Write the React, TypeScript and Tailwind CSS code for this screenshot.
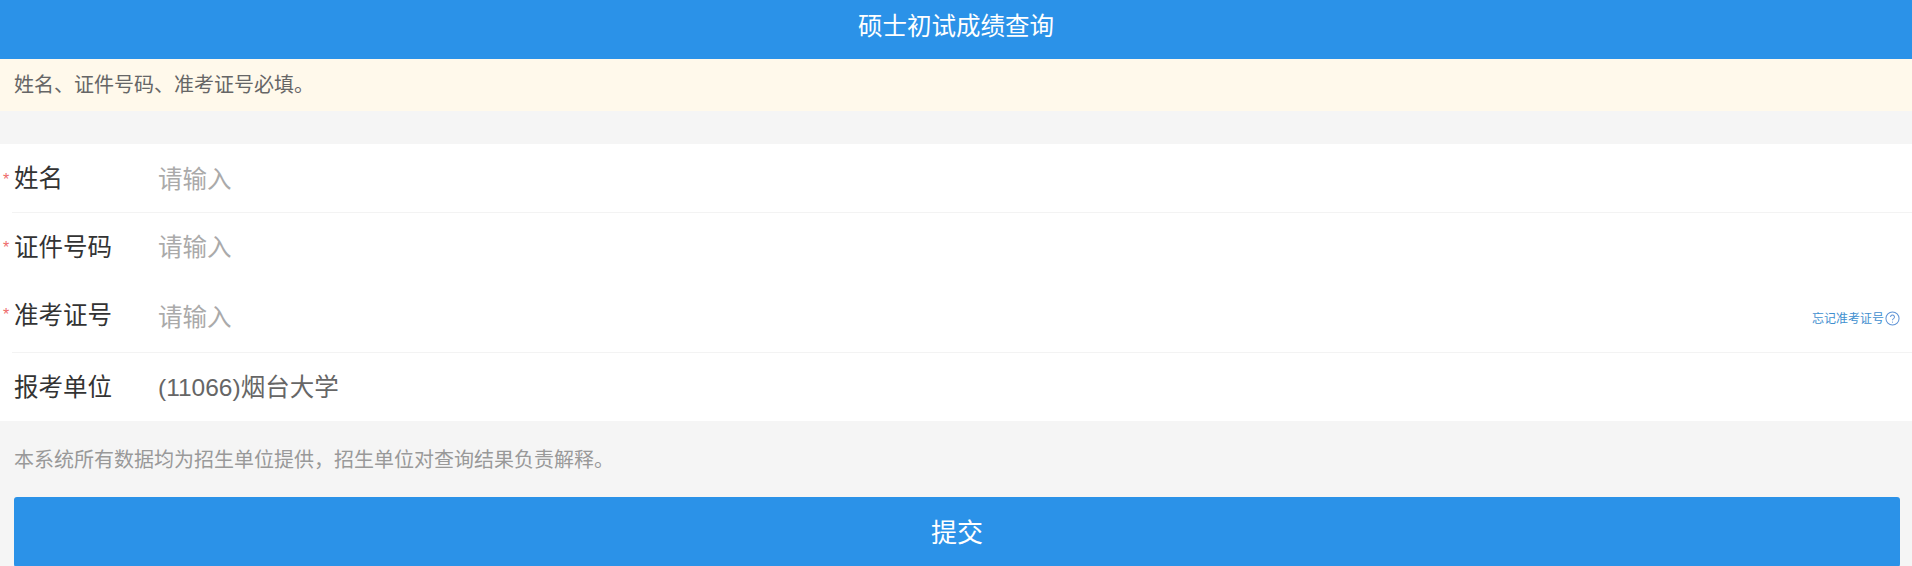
const font = '[font-family:"Liberation_Sans","Noto_Sans_CJK_SC",sans-serif]';

function Row({
  label,
  required,
  placeholder,
  value,
  border,
  height,
  extra,
  labelClass = "",
  starClass = "-translate-y-[6px]",
}: {
  label: string;
  required?: boolean;
  placeholder?: string;
  value?: string;
  border?: boolean;
  height: string;
  extra?: React.ReactNode;
  labelClass?: string;
  starClass?: string;
}) {
  return (
    <div className={`relative ml-3 flex items-center pr-3 ${height} ${border ? "border-b border-[#f3f3f3]" : ""}`}>
      {required && (
        <span className={`absolute -left-[9px] top-1/2 text-[16px] leading-none text-[#ee6a6a] ${starClass}`}>*</span>
      )}
      <label className={`w-[146px] shrink-0 pl-0.5 text-[24.5px] leading-none text-[#333333] ${labelClass}`}>{label}</label>
      {value ? (
        <span className="flex-1 text-[24.5px] leading-none text-[#666666]">{value}</span>
      ) : (
        <input
          readOnly
          placeholder={placeholder}
          className="min-w-0 flex-1 bg-transparent text-[24.5px] leading-none outline-none placeholder:text-[#aaaaaa]"
        />
      )}
      {extra}
    </div>
  );
}

export default function App() {
  return (
    <div className={`flex h-[566px] flex-col overflow-hidden bg-[#f5f5f5] ${font}`}>
      <header className="flex h-[59px] shrink-0 items-center justify-center bg-[#2b92e8] pb-[4px] text-[24.5px] text-white">
        硕士初试成绩查询
      </header>
      <div className="flex h-[52px] shrink-0 items-center bg-[#fff9eb] pl-3.5 text-[20px] text-[#666666]">
        姓名、证件号码、准考证号必填。
      </div>
      <form className="mt-[33px] shrink-0 bg-white">
        <Row label="姓名" required placeholder="请输入" border height="h-[69px] pt-[3px]" />
        <Row label="证件号码" required placeholder="请输入" height="h-[68px] pt-[2px]" starClass="-translate-y-[7px]" />
        <Row
          label="准考证号"
          required
          placeholder="请输入"
          border
          height="h-[72px] pt-[2px]"
          labelClass="-translate-y-[1px]"
          starClass="-translate-y-[10px]"
          extra={
            <a className="flex shrink-0 translate-y-px items-center gap-px text-[12px] leading-none text-[#3f8fcf]">
              忘记准考证号
              <svg viewBox="0 0 16 16" className="h-[15px] w-[15px]" fill="none" stroke="#5f93d6" strokeWidth="1.1">
                <circle cx="8" cy="8" r="7" />
                <path d="M5.9 6.3a2.1 2.1 0 1 1 3.2 1.8c-.7.4-1.1.9-1.1 1.7" />
                <circle cx="8" cy="11.8" r=".6" fill="#5f93d6" stroke="none" />
              </svg>
            </a>
          }
        />
        <Row label="报考单位" value="(11066)烟台大学" height="h-[68px] pt-[2px]" />
      </form>
      <p className="mt-[23px] pl-3.5 text-[20px] leading-[32px] text-[#999999]">
        本系统所有数据均为招生单位提供{"\uFF0C"}招生单位对查询结果负责解释。
      </p>
      <div className="mt-[21px] shrink-0 px-3.5 pr-3">
        <button
          type="button"
          className="flex h-[70px] w-full items-center justify-center rounded-[3px] bg-[#2b92e8] pt-[2px] text-[26px] text-white"
        >
          提交
        </button>
      </div>
    </div>
  );
}
